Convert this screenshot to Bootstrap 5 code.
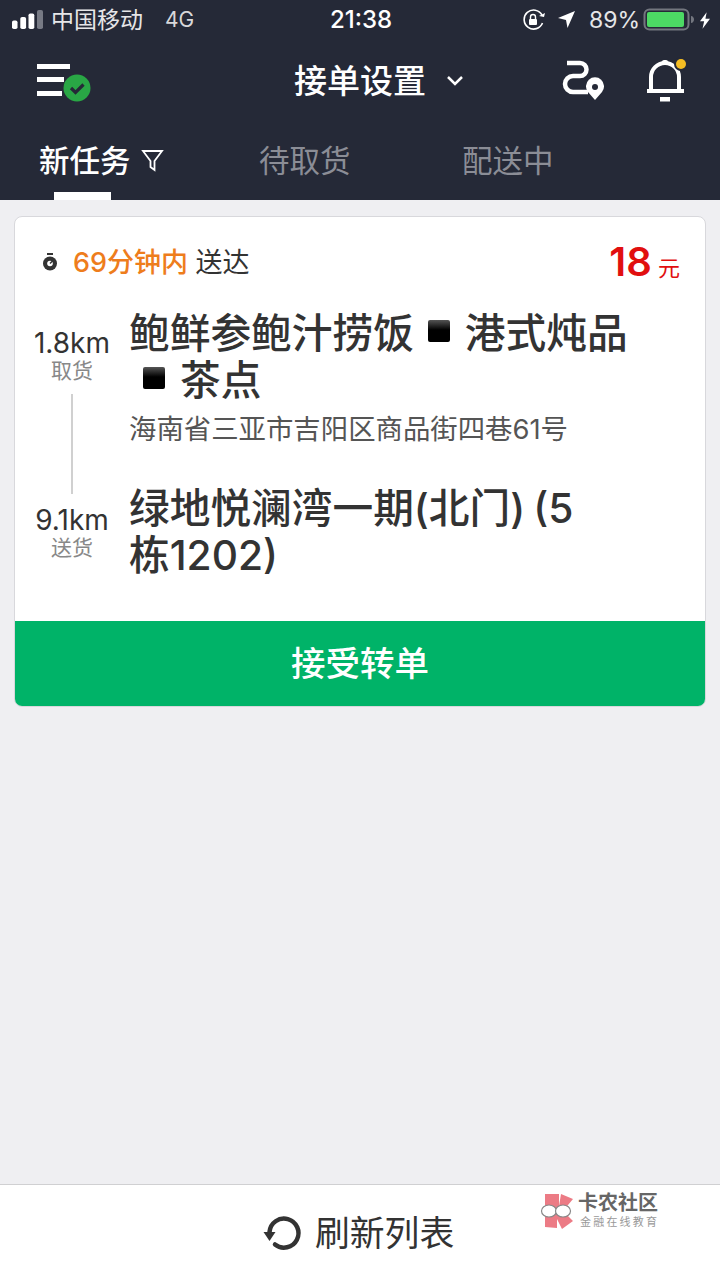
<!doctype html>
<html lang="zh"><head><meta charset="utf-8">
<link href="https://cdn.jsdelivr.net/npm/bootstrap@5.3.0/dist/css/bootstrap.min.css" rel="stylesheet">
<style>
html,body{height:1280px;overflow:hidden}
body{width:720px;background:#efeff2;font-family:Inter,"Noto Sans CJK SC",sans-serif;color:#333}
svg{display:block;flex:none}
.app{height:1280px}
.hdr{background:#252937;height:200px;color:#fff;flex:none}
.status{height:40px;padding:0 10px 0 12px}
.st-left{width:318px;flex:none}
.carrier{margin-left:8px;color:#e6e6e8;font-size:23px;white-space:nowrap}
.net{margin-left:22px;color:#d8d8da;font-size:21px}
.clock{font-size:24px;line-height:28px;font-weight:500}
.ml-arrow{margin-left:11px}
.pct{font-size:23px;line-height:28px;color:#e6e6e8;width:54px;margin-left:12px}
.ml-bolt{margin-left:5px}
.topbar{height:82px;padding-left:37px}
.ic-menu{margin-top:4px}
.ttl{font-size:33px;font-weight:500;line-height:40px;margin-left:201px;white-space:nowrap}
.ic-chev{margin-left:19px}
.ic-route{margin-left:97px;margin-bottom:2px}
.ic-bell{margin-left:39px;margin-bottom:2px}
.tabsx{padding:19px 0 0 39px;height:70px;flex-wrap:nowrap;align-items:flex-start}
.tabsx .nav-link{padding:0;font-size:30.5px;line-height:40px;color:#8b8d96;white-space:nowrap}
.tabsx .nav-link.active{color:#fff;font-weight:500}
.ic-filter{margin:8px 0 0 10.5px}
.t2{margin-left:95px}
.t3{margin-left:111.5px}
.tab-mark{margin-left:54px;width:57px;height:8px;background:#fff;margin-top:auto}
.sheet{margin:16px 14px 0;height:491px;background:#fff;border:1px solid #d8d8dc;border-radius:8px;overflow:hidden;width:692px;flex:none}
.rowa{height:404px;flex:none}
.headrow{height:46px;margin-top:22px;padding:0 25px 0 27px}
.tm{margin:2px 0 0 15px;font-size:27px;line-height:36px;white-space:nowrap}
.tm b{color:#ee7d1c;font-weight:500}
.pr{color:#e10f0f;font-size:22px;line-height:46px;white-space:nowrap;margin-top:6px}
.pr b{font-size:40px;font-weight:600}
.body-grid{margin-top:25px}
.leftcol{width:114px;flex:none;padding-top:18px}
.dist{text-align:center;font-size:28px;line-height:30px;color:#333;white-space:nowrap}
.dist small{display:block;font-size:21px;line-height:26px;color:#888}
.vline{width:2px;height:100px;background:#d0d0d0;margin:10px 0 11px}
.big{font-size:40.700px;line-height:47px;font-weight:500;color:#333;white-space:nowrap}
.addr{margin:7px 0 38px;font-size:27.400px;line-height:36px;color:#555;white-space:nowrap}
.sq{display:inline-block;width:22px;height:22px;border-radius:2px;background:linear-gradient(#555,#000 45%,#000);margin:0 15px 0 14px;vertical-align:6px}
.pgap{margin-left:8px}
.go{background:#00b368;color:#fff;height:86px;line-height:84px;text-align:center;font-size:34.500px;font-weight:500;border:0;border-radius:0;width:100%;display:block;padding:0;flex:none}
.foot{height:96px;background:#fff;border-top:1px solid #d0d0d2;padding-left:262px;flex:none}
.ref{margin-left:11px;font-size:34.800px;line-height:46px;color:#333;white-space:nowrap}
.wm{position:absolute;left:540px;top:8px}
.logo1{font-size:20px;line-height:24px;font-weight:700;color:#666;margin:-2px 0 0 2px;white-space:nowrap}
.logo2{font-size:11px;line-height:14px;color:#999;letter-spacing:2.2px;margin-left:4px;white-space:nowrap}
</style></head><body>
<div class="app d-flex flex-column">
<header class="hdr d-flex flex-column">
<div class="status d-flex align-items-center">
<div class="st-left d-flex align-items-center">
<svg width="31" height="20" viewBox="0 0 31 20"><rect x="0" y="10.500" width="5.500" height="8.500" rx="1.800" fill="#fff"/><rect x="8.300" y="7" width="5.800" height="12" rx="1.800" fill="#fff"/><rect x="16.500" y="3.500" width="5.800" height="15.500" rx="1.800" fill="#fff"/><rect x="25" y="0" width="6" height="19" rx="1.800" fill="#777a84"/></svg>
<span class="carrier">中国移动</span><span class="net">4G</span>
</div>
<span class="clock">21:38</span>
<div class="d-flex align-items-center ms-auto">
<svg width="24" height="22" viewBox="0 0 24 22" fill="none"><path d="M20 6A9.500 9.500 0 1 0 20.500 14" stroke="#fff" stroke-width="1.600"/><path d="M17 7l5 1 1-4z" fill="#fff"/><rect x="7" y="10" width="8" height="6" rx="1" fill="#fff"/><path d="M8.500 10V8a2.500 2.500 0 0 1 5 0v2" stroke="#fff" stroke-width="1.400"/></svg>
<svg class="ml-arrow" width="20" height="20" viewBox="0 0 20 20"><path d="M18 1L10.500 18 9 10 1 8z" fill="#fff"/></svg>
<span class="pct">89%</span>
<svg width="52" height="24" viewBox="0 0 52 24" fill="none"><rect x="1.500" y="1.500" width="44" height="20" rx="5" stroke="#73767f" stroke-width="2"/><rect x="4" y="4" width="37" height="15" rx="2" fill="#4cd964"/><path d="M48 8c2 0 3 2 3 3.500s-1 3.500-3 3.500z" fill="#73767f"/></svg>
<svg class="ml-bolt" width="10" height="19" viewBox="0 0 12 20"><path d="M8 0L0 11h5l-2 9 9-12H6.500z" fill="#fff"/></svg>
</div>
</div>
<div class="topbar d-flex align-items-center">
<svg class="ic-menu" width="56" height="42" viewBox="0 0 56 42"><rect x="0" y="2" width="33" height="5" fill="#fff"/><rect x="0" y="15" width="27" height="5" fill="#fff"/><rect x="0" y="29" width="25" height="5" fill="#fff"/><circle cx="40" cy="26" r="13.500" fill="#29a745"/><path d="M34 26l4.500 4.500L46.500 22.500" fill="none" stroke="#252937" stroke-width="3.200"/></svg>
<span class="ttl">接单设置</span>
<svg class="ic-chev" width="20" height="14" viewBox="0 0 20 14" fill="none"><path d="M3 3l7 7 7-7" stroke="#fff" stroke-width="2.500"/></svg>
<svg class="ic-route" width="44" height="44" viewBox="0 0 44 44" fill="none"><path d="M5 5h13a6.500 6.500 0 0 1 0 13H11a8 8 0 0 0 0 16H26" stroke="#fff" stroke-width="4.500"/><path d="M33 42l-7-8a9 9 0 1 1 14 0z" fill="#fff"/><circle cx="33" cy="29" r="3" fill="#252937"/></svg>
<svg class="ic-bell" width="44" height="46" viewBox="0 0 44 46" fill="none"><path d="M6 33V20a14 14 0 0 1 28 0V33" stroke="#fff" stroke-width="4"/><rect x="17" y="3" width="6" height="5" rx="2" fill="#fff"/><rect x="2" y="32" width="37" height="4" fill="#fff"/><rect x="15" y="40" width="10" height="4.500" fill="#fff"/><circle cx="36" cy="7" r="7" fill="#252937"/><circle cx="36" cy="7" r="5" fill="#f5bd23"/></svg>
</div>
<nav class="nav tabsx">
<a class="nav-link active">新任务</a>
<svg class="ic-filter" width="23" height="24" viewBox="0 0 23 24" fill="none"><path d="M2 2h19l-7.500 10v9l-4-3V12z" stroke="#fff" stroke-width="1.800"/></svg>
<a class="nav-link t2">待取货</a>
<a class="nav-link t3">配送中</a>
</nav>
<div class="tab-mark"></div>
</header>
<main class="card sheet">
<div class="rowa">
<div class="headrow d-flex align-items-center">
<svg width="16" height="18" viewBox="0 0 16 18"><rect x="5" y="0" width="6" height="2" fill="#333"/><circle cx="8" cy="10.500" r="7" fill="#333"/><circle cx="8" cy="10.500" r="2.800" fill="#fff"/><path d="M8 10.500l3-3" stroke="#333" stroke-width="1.500"/></svg>
<div class="tm"><b>69分钟内</b> 送达</div>
<div class="pr ms-auto"><b>18</b> 元</div>
</div>
<div class="body-grid d-flex">
<div class="leftcol d-flex flex-column align-items-center">
<div class="dist">1.8km<small>取货</small></div>
<div class="vline"></div>
<div class="dist">9.1km<small>送货</small></div>
</div>
<div>
<div class="big">鲍鲜参鲍汁捞饭<span class="sq"></span>港式炖品<br><span class="sq"></span>茶点</div>
<div class="addr">海南省三亚市吉阳区商品街四巷61号</div>
<div class="big">绿地悦澜湾一期(北门)<span class="pgap">(5</span><br>栋1202)</div>
</div>
</div>
</div>
<button class="btn go">接受转单</button>
</main>
<footer class="foot mt-auto d-flex align-items-center position-relative">
<svg width="42" height="40" viewBox="0 0 42 40" fill="none"><path d="M13 31.500A14.500 14.500 0 1 0 7.500 19" stroke="#333" stroke-width="4.500" stroke-linecap="round"/><path d="M1.500 19H13.500L7.500 28z" fill="#333"/></svg>
<span class="ref">刷新列表</span>
<div class="wm d-flex">
<svg width="36" height="38" viewBox="0 0 36 38"><path d="M5 1h14v12L21 1l12 5-10 12 10 10-11 8-5-10v9L5 34z" fill="#ec7b85"/><ellipse cx="9" cy="18" rx="7.500" ry="6" fill="#fff" stroke="#888" stroke-width="1.200"/><ellipse cx="23" cy="18" rx="7.500" ry="6" fill="#fff" stroke="#888" stroke-width="1.200"/></svg>
<div><div class="logo1">卡农社区</div><div class="logo2">金融在线教育</div></div>
</div>
</footer>
</div>
<script src="https://cdn.jsdelivr.net/npm/bootstrap@5.3.0/dist/js/bootstrap.bundle.min.js"></script>
</body></html>
